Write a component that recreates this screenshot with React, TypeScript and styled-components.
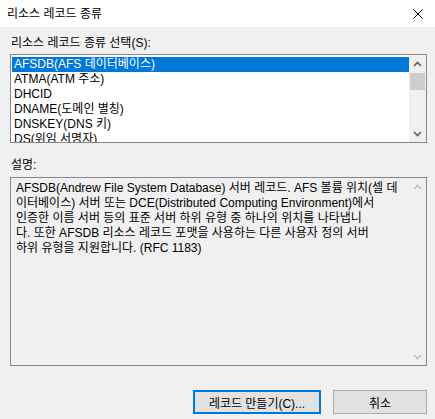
import React from "react";
import styled, { createGlobalStyle } from "styled-components";

const Global = createGlobalStyle`
  html, body { margin: 0; padding: 0; background: #f0f0f0; }
  body { font-family: "Liberation Sans", "Noto Sans CJK KR", sans-serif; }
`;

const Window = styled.div`
  width: 435px;
  height: 419px;
  display: flex;
  flex-direction: column;
  background: #f0f0f0;
  font-family: "Liberation Sans", "Noto Sans CJK KR", sans-serif;
  font-size: 12px;
  color: #000;
  overflow: hidden;
`;

const TitleBar = styled.div`
  height: 27px;
  flex: none;
  background: #ffffff;
  display: flex;
  align-items: center;
  justify-content: space-between;
  padding: 0 6px 0 7px;
`;

const Title = styled.span`
  font-size: 12px;
  line-height: 16px;
`;

const CloseButton = styled.div`
  width: 10px;
  height: 10px;
  margin-right: 6px;
  display: flex;
`;

const Content = styled.div`
  display: flex;
  flex-direction: column;
  padding: 8px 8px 0 10px;
`;

const Label = styled.div<{ $gap: number; $after: number }>`
  height: 16px;
  line-height: 16px;
  padding-left: 1px;
  margin-top: ${(p) => p.$gap}px;
  margin-bottom: ${(p) => p.$after}px;
  white-space: nowrap;
`;

const ListBox = styled.div`
  height: 89px;
  box-sizing: border-box;
  border: 1px solid #828790;
  background: #ffffff;
  display: flex;
`;

const Items = styled.div`
  flex: 1;
  padding: 2px 0 0 1px;
  overflow: hidden;
`;

const Item = styled.div<{ $selected?: boolean }>`
  height: 15px;
  line-height: 15px;
  padding-left: 2px;
  white-space: nowrap;
  overflow: hidden;
  background: ${(p) => (p.$selected ? "#0078d7" : "transparent")};
  color: ${(p) => (p.$selected ? "#ffffff" : "#000000")};
`;

const ScrollBar = styled.div<{ $bg: string }>`
  width: 17px;
  flex: none;
  background: ${(p) => p.$bg};
  display: flex;
  flex-direction: column;
`;

const ArrowCell = styled.div`
  height: 17px;
  display: flex;
  align-items: center;
  justify-content: center;
`;

const Track = styled.div`
  flex: 1;
  display: flex;
  flex-direction: column;
`;

const Thumb = styled.div`
  margin: 1px 1px 0 1px;
  height: 17px;
  background: #cdcdcd;
`;

const DescBox = styled.div`
  height: 189px;
  box-sizing: border-box;
  border: 1px solid #828790;
  background: #f0f0f0;
  display: flex;
`;

const DescText = styled.div`
  flex: 1;
  padding: 3px 0 0 5px;
  line-height: 15px;
  overflow: hidden;
`;

const DescLine = styled.div`
  height: 15px;
  white-space: nowrap;
`;

const ButtonRow = styled.div`
  display: flex;
  justify-content: flex-end;
  gap: 12px;
  margin-top: 24px;
`;

const Button = styled.div<{ $default?: boolean; $w: number }>`
  width: ${(p) => p.$w}px;
  height: 24px;
  box-sizing: border-box;
  background: #e1e1e1;
  border: ${(p) => (p.$default ? "2px solid #0078d7" : "1px solid #adadad")};
  display: flex;
  align-items: center;
  justify-content: center;
  white-space: nowrap;
`;

const Chevron = ({ up, color }: { up?: boolean; color: string }) => (
  <svg width="9" height="6" viewBox="0 0 9 6">
    <polyline
      points={up ? "1,5 4.5,1.5 8,5" : "1,1 4.5,4.5 8,1"}
      fill="none"
      stroke={color}
      strokeWidth="1.6"
    />
  </svg>
);

const items = [
  "AFSDB(AFS 데이터베이스)",
  "ATMA(ATM 주소)",
  "DHCID",
  "DNAME(도메인 별칭)",
  "DNSKEY(DNS 키)",
  "DS(위임 서명자)",
];

const desc = [
  "AFSDB(Andrew File System Database) 서버 레코드. AFS 볼륨 위치(셀 데",
  "이터베이스) 서버 또는 DCE(Distributed Computing Environment)에서",
  "인증한 이름 서버 등의 표준 서버 하위 유형 중 하나의 위치를 나타냅니",
  "다. 또한 AFSDB 리소스 레코드 포맷을 사용하는 다른 사용자 정의 서버",
  "하위 유형을 지원합니다. (RFC 1183)",
];

export default function App() {
  return (
    <>
      <Global />
      <Window>
        <TitleBar>
          <Title>리소스 레코드 종류</Title>
          <CloseButton>
            <svg width="10" height="10" viewBox="0 0 10 10">
              <path d="M0.5 0.5 L9.5 9.5 M9.5 0.5 L0.5 9.5" stroke="#000" strokeWidth="1" />
            </svg>
          </CloseButton>
        </TitleBar>
        <Content>
          <Label $gap={0} $after={3}>리소스 레코드 종류 선택(S):</Label>
          <ListBox>
            <Items>
              {items.map((t, i) => (
                <Item key={t} $selected={i === 0}>
                  {t}
                </Item>
              ))}
            </Items>
            <ScrollBar $bg="#f0f0f0">
              <ArrowCell>
                <Chevron up color="#606060" />
              </ArrowCell>
              <Track>
                <Thumb />
              </Track>
              <ArrowCell>
                <Chevron color="#606060" />
              </ArrowCell>
            </ScrollBar>
          </ListBox>
          <Label $gap={14} $after={4}>설명:</Label>
          <DescBox>
            <DescText>
              {desc.map((l) => (
                <DescLine key={l}>{l}</DescLine>
              ))}
            </DescText>
            <ScrollBar $bg="#f0f0f0">
              <ArrowCell>
                <Chevron up color="#c0c0c0" />
              </ArrowCell>
              <Track />
              <ArrowCell>
                <Chevron color="#c0c0c0" />
              </ArrowCell>
            </ScrollBar>
          </DescBox>
          <ButtonRow>
            <Button $default $w={128}>레코드 만들기(C)...</Button>
            <Button $w={94}>취소</Button>
          </ButtonRow>
        </Content>
      </Window>
    </>
  );
}
